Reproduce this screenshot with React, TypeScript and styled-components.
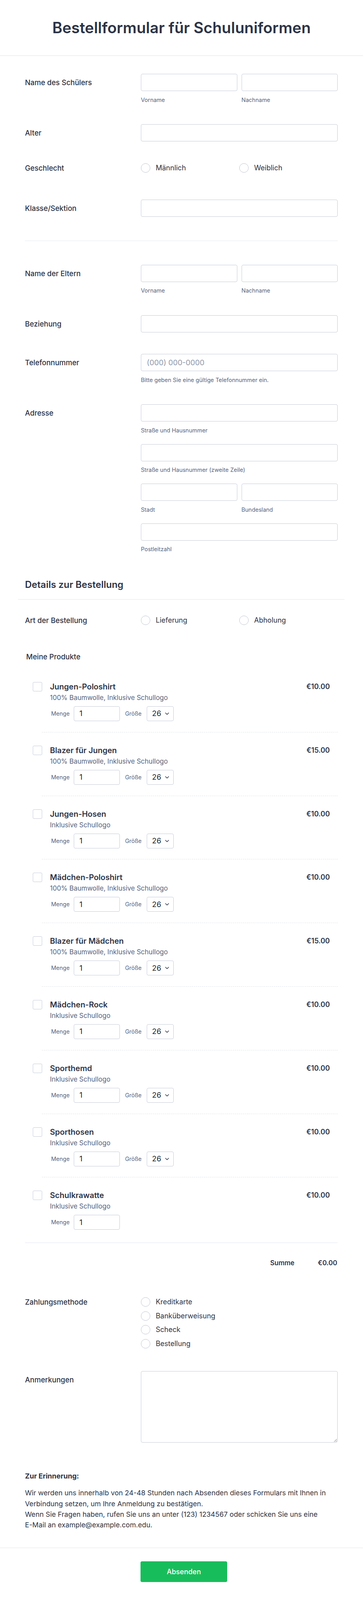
import React from "react";
import styled, { createGlobalStyle } from "styled-components";

const GlobalStyle = createGlobalStyle`
  * {
    box-sizing: border-box;
  }
  html,
  body {
    margin: 0;
    padding: 0;
  }
  body {
    background: #ffffff;
    font-family: Inter, "Noto Sans", sans-serif;
    color: #2c3345;
  }
`;

const Page = styled.div`
  width: 930px;
  background: #ffffff;
`;

const Header = styled.header`
  height: 143px;
  border-bottom: 1px solid #dde1e8;
  display: flex;
  align-items: center;
  justify-content: center;
`;

const Title = styled.h1`
  margin: 0;
  font-size: 39px;
  line-height: 46px;
  font-weight: 600;
  color: #2c3345;
`;

const Body = styled.main`
  display: block;
  padding: 18px 65px 44px 64px;
`;

const Row = styled.div<{ $pt?: number; $pb?: number }>`
  display: flex;
  padding: ${(p) => p.$pt ?? 28}px 0 ${(p) => p.$pb ?? 27.5}px;
`;

const Label = styled.div<{ $offset?: number }>`
  width: 297px;
  flex: none;
  padding-top: ${(p) => p.$offset ?? 10}px;
  font-size: 18.5px;
  line-height: 24px;
  font-weight: 500;
`;

const Field = styled.div`
  flex: 1;
  min-width: 0;
`;

const Pair = styled.div`
  display: grid;
  grid-template-columns: minmax(0, 1fr) minmax(0, 1fr);
  column-gap: 11px;
`;

const Input = styled.input`
  display: block;
  width: 100%;
  height: 44px;
  margin: 0;
  padding: 0 14px;
  border: 1px solid #c3cad8;
  border-radius: 4px;
  background: #ffffff;
  font-family: inherit;
  font-size: 19px;
  color: #2c3345;
  outline: none;

  &::placeholder {
    color: #8d97aa;
  }
`;

const SubLabel = styled.div`
  margin-top: 14.5px;
  font-size: 14.5px;
  line-height: 15px;
  color: #57647e;
`;

const AddressPart = styled.div`
  & + & {
    margin-top: 28px;
  }
`;

const RadioGrid = styled.div<{ $cols: number }>`
  display: grid;
  grid-template-columns: repeat(${(p) => p.$cols}, minmax(0, 1fr));
`;

const RadioOption = styled.label`
  display: flex;
  align-items: center;
  gap: 14px;
  height: 24px;
  margin-bottom: 11.7px;
  font-size: 18px;
  line-height: 24px;
  color: #2c3345;
`;

const RadioCircle = styled.span`
  flex: none;
  width: 24px;
  height: 24px;
  border-radius: 50%;
  border: 1px solid #bcc2ce;
  background: #ffffff;
`;

const Divider = styled.hr`
  height: 0;
  margin: 33.6px 0 33px;
  border: none;
  border-top: 1px solid #e6e9ee;
`;

const SectionHead = styled.h2`
  margin: 0 -18px 13px;
  padding: 41.5px 18px 22.5px;
  border-bottom: 1px solid #e3e6ec;
  font-size: 24px;
  line-height: 29px;
  font-weight: 600;
`;

const ProductsTitle = styled.div`
  margin-top: 31px;
  padding-left: 3px;
  font-size: 18.5px;
  line-height: 22px;
  font-weight: 500;
`;

const ProductList = styled.div`
  margin-top: 19.8px;
`;

const ProductItem = styled.div`
  display: flex;
  align-items: flex-start;
  padding: 34px 20px 27.8px;
`;

const Checkbox = styled.span`
  flex: none;
  width: 24px;
  height: 24px;
  margin-right: 20px;
  border: 1px solid #c3cad8;
  border-radius: 3px;
  background: #ffffff;
`;

const ProductInfo = styled.div`
  flex: 1;
`;

const ProductName = styled.div`
  font-size: 20px;
  line-height: 24px;
  font-weight: 600;
`;

const ProductDesc = styled.div`
  margin-top: 5px;
  font-size: 17px;
  line-height: 22px;
  color: #57647e;
`;

const QtyRow = styled.div`
  display: flex;
  align-items: center;
  height: 38px;
  margin-top: 11px;
  padding-left: 3px;
`;

const SmallLabel = styled.span<{ $gap: number }>`
  margin-right: ${(p) => p.$gap}px;
  font-size: 14.5px;
  line-height: 16px;
  color: #57647e;
`;

const QtyBox = styled.div`
  display: flex;
  align-items: center;
  width: 118px;
  height: 38px;
  margin-right: 13px;
  padding-left: 13px;
  border: 1px solid #c3cad8;
  border-radius: 4px;
  font-size: 19px;
  color: #1b1f29;
`;

const SizeSelect = styled.div`
  display: flex;
  align-items: center;
  justify-content: space-between;
  width: 69px;
  height: 38px;
  padding: 0 11px 0 13px;
  border: 1px solid #c3cad8;
  border-radius: 4px;
  font-size: 19px;
  color: #1b1f29;
`;

const Price = styled.div`
  font-size: 18px;
  line-height: 24px;
  font-weight: 600;
`;

const Separator = styled.div`
  margin-left: 43px;
  border-top: 1px dashed #dde1e7;
`;

const TotalRow = styled.div`
  display: flex;
  justify-content: flex-end;
  gap: 60px;
  margin: 5.3px 0 49px;
  padding: 39.5px 1px 0 0;
  border-top: 1px solid #e3e6ec;
  font-size: 17px;
  line-height: 22px;
  font-weight: 600;
`;

const TextArea = styled.textarea`
  display: block;
  width: 100%;
  height: 183px;
  margin: 0;
  border: 1px solid #c3cad8;
  border-radius: 4px;
  resize: vertical;
  font-family: inherit;
  outline: none;
`;

const Note = styled.div`
  margin-top: 47.5px;
`;

const NoteTitle = styled.div`
  font-size: 18px;
  line-height: 22px;
  font-weight: 700;
`;

const NoteText = styled.p`
  margin: 18.3px 0 0;
  font-size: 17.8px;
  line-height: 27.4px;
`;

const NoBreak = styled.span`
  white-space: nowrap;
`;

const Footer = styled.footer`
  display: flex;
  justify-content: center;
  padding: 34px 0 46px 12px;
  border-top: 1px solid #e3e6ec;
`;

const SubmitButton = styled.button`
  width: 222px;
  height: 53px;
  margin: 0;
  border: none;
  border-radius: 4px;
  background: #18bd5b;
  color: #ffffff;
  font-family: inherit;
  font-size: 18px;
  font-weight: 500;
`;

const Chevron = () => (
  <svg width="10" height="6" viewBox="0 0 10 6" fill="none">
    <path d="M1 1l4 4 4-4" stroke="#2c3345" strokeWidth="1.6" strokeLinecap="round" strokeLinejoin="round" />
  </svg>
);

const Radios = ({ options, cols }: { options: string[]; cols: number }) => (
  <RadioGrid $cols={cols}>
    {options.map((o) => (
      <RadioOption key={o}>
        <RadioCircle />
        {o}
      </RadioOption>
    ))}
  </RadioGrid>
);

const products = [
  { name: "Jungen-Poloshirt", desc: "100% Baumwolle, Inklusive Schullogo", price: "€10.00", size: true },
  { name: "Blazer für Jungen", desc: "100% Baumwolle, Inklusive Schullogo", price: "€15.00", size: true },
  { name: "Jungen-Hosen", desc: "Inklusive Schullogo", price: "€10.00", size: true },
  { name: "Mädchen-Poloshirt", desc: "100% Baumwolle, Inklusive Schullogo", price: "€10.00", size: true },
  { name: "Blazer für Mädchen", desc: "100% Baumwolle, Inklusive Schullogo", price: "€15.00", size: true },
  { name: "Mädchen-Rock", desc: "Inklusive Schullogo", price: "€10.00", size: true },
  { name: "Sporthemd", desc: "Inklusive Schullogo", price: "€10.00", size: true },
  { name: "Sporthosen", desc: "Inklusive Schullogo", price: "€10.00", size: true },
  { name: "Schulkrawatte", desc: "Inklusive Schullogo", price: "€10.00", size: false },
];

const NamePair = () => (
  <Pair>
    <div>
      <Input />
      <SubLabel>Vorname</SubLabel>
    </div>
    <div>
      <Input />
      <SubLabel>Nachname</SubLabel>
    </div>
  </Pair>
);

const App = () => {
  return (
    <Page>
      <GlobalStyle />
      <Header>
        <Title>Bestellformular für Schuluniformen</Title>
      </Header>
      <Body>
        <Row>
          <Label>Name des Schülers</Label>
          <Field>
            <NamePair />
          </Field>
        </Row>
        <Row>
          <Label>Alter</Label>
          <Field>
            <Input />
          </Field>
        </Row>
        <Row>
          <Label $offset={0}>Geschlecht</Label>
          <Field>
            <Radios options={["Männlich", "Weiblich"]} cols={2} />
          </Field>
        </Row>
        <Row $pt={30.2}>
          <Label>Klasse/Sektion</Label>
          <Field>
            <Input />
          </Field>
        </Row>

        <Divider />

        <Row>
          <Label>Name der Eltern</Label>
          <Field>
            <NamePair />
          </Field>
        </Row>
        <Row>
          <Label>Beziehung</Label>
          <Field>
            <Input />
          </Field>
        </Row>
        <Row>
          <Label>Telefonnummer</Label>
          <Field>
            <Input placeholder="(000) 000-0000" />
            <SubLabel>Bitte geben Sie eine gültige Telefonnummer ein.</SubLabel>
          </Field>
        </Row>
        <Row>
          <Label>Adresse</Label>
          <Field>
            <AddressPart>
              <Input />
              <SubLabel>Straße und Hausnummer</SubLabel>
            </AddressPart>
            <AddressPart>
              <Input />
              <SubLabel>Straße und Hausnummer (zweite Zeile)</SubLabel>
            </AddressPart>
            <AddressPart>
              <Pair>
                <div>
                  <Input />
                  <SubLabel>Stadt</SubLabel>
                </div>
                <div>
                  <Input />
                  <SubLabel>Bundesland</SubLabel>
                </div>
              </Pair>
            </AddressPart>
            <AddressPart>
              <Input />
              <SubLabel>Postleitzahl</SubLabel>
            </AddressPart>
          </Field>
        </Row>

        <SectionHead>Details zur Bestellung</SectionHead>

        <Row>
          <Label $offset={0}>Art der Bestellung</Label>
          <Field>
            <Radios options={["Lieferung", "Abholung"]} cols={2} />
          </Field>
        </Row>

        <ProductsTitle>Meine Produkte</ProductsTitle>
        <ProductList>
          {products.map((p, i) => (
            <React.Fragment key={p.name}>
              <ProductItem>
                <Checkbox />
                <ProductInfo>
                  <ProductName>{p.name}</ProductName>
                  <ProductDesc>{p.desc}</ProductDesc>
                  <QtyRow>
                    <SmallLabel $gap={11}>Menge</SmallLabel>
                    <QtyBox>1</QtyBox>
                    {p.size && (
                      <>
                        <SmallLabel $gap={13}>Größe</SmallLabel>
                        <SizeSelect>
                          26
                          <Chevron />
                        </SizeSelect>
                      </>
                    )}
                  </QtyRow>
                </ProductInfo>
                <Price>{p.price}</Price>
              </ProductItem>
              {i < products.length - 1 && <Separator />}
            </React.Fragment>
          ))}
        </ProductList>
        <TotalRow>
          <span>Summe</span>
          <span>€0.00</span>
        </TotalRow>

        <Row>
          <Label $offset={0}>Zahlungsmethode</Label>
          <Field>
            <Radios options={["Kreditkarte", "Banküberweisung", "Scheck", "Bestellung"]} cols={1} />
          </Field>
        </Row>
        <Row $pt={18.7}>
          <Label>Anmerkungen</Label>
          <Field>
            <TextArea />
          </Field>
        </Row>

        <Note>
          <NoteTitle>Zur Erinnerung:</NoteTitle>
          <NoteText>
            Wir werden uns innerhalb von 24-48 Stunden nach Absenden dieses Formulars mit Ihnen in Verbindung
            setzen, um Ihre Anmeldung zu bestätigen.
            <br />
            Wenn Sie Fragen haben, rufen Sie uns an unter (123) 1234567 oder schicken Sie uns eine{" "}
            <NoBreak>E-Mail</NoBreak> an example@example.com.edu.
          </NoteText>
        </Note>
      </Body>
      <Footer>
        <SubmitButton>Absenden</SubmitButton>
      </Footer>
    </Page>
  );
};

export default App;
